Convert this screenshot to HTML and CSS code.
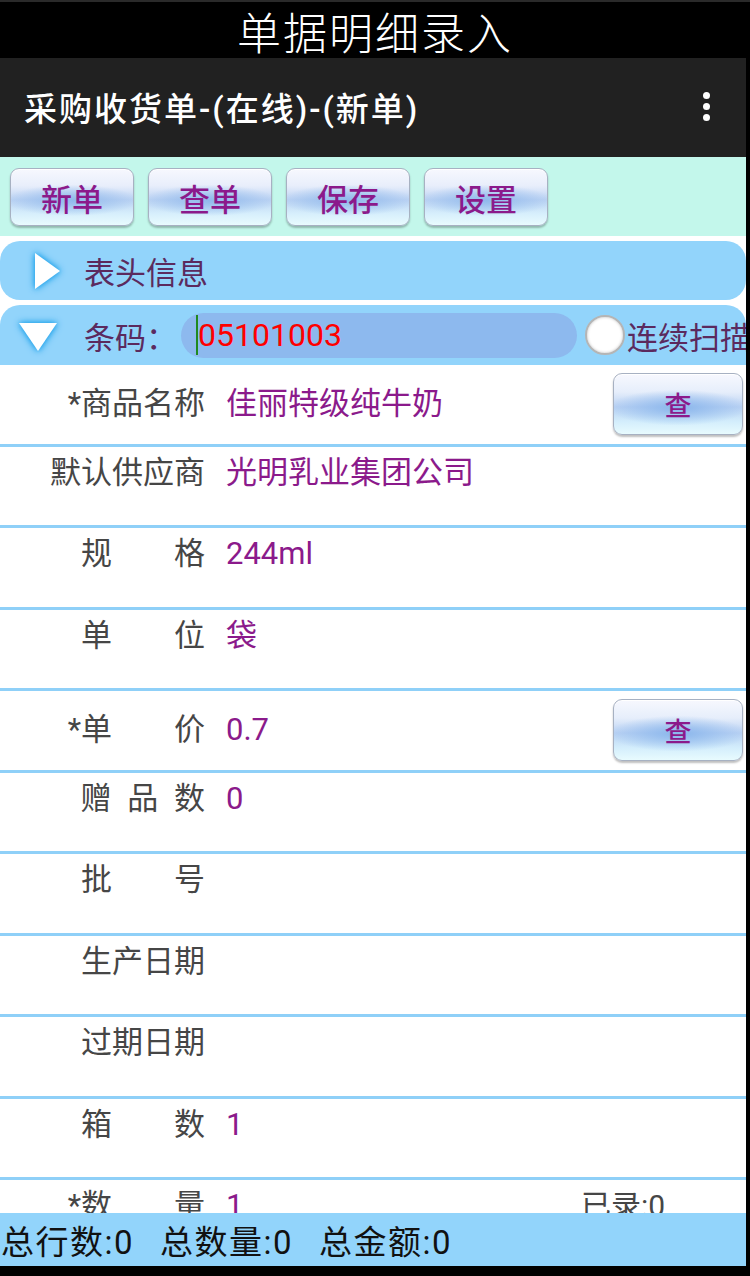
FILE: index.html
```html
<!DOCTYPE html>
<html lang="zh">
<head>
  <meta charset="UTF-8">
  <meta name="viewport" content="width=device-width, initial-scale=1.0">
  <title>单据明细录入</title>
  <link rel="stylesheet" href="styles.css">
</head>
<body>

  <div class="page-title">单据明细录入</div>

  <div class="screen">
    <!-- barra superior -->
    <div class="appbar">
      <span class="appbar-title">采购收货单-(在线)-(新单)</span>
      <span class="menu-dots"><i></i><i></i><i></i></span>
    </div>

    <div class="toolbar">
      <button type="button" class="tool-btn">新单</button>
      <button type="button" class="tool-btn">查单</button>
      <button type="button" class="tool-btn">保存</button>
      <button type="button" class="tool-btn">设置</button>
    </div>

    <div class="section">
      <div class="head-row">
        <svg class="arrow arrow-right" width="40" height="48" viewBox="0 0 40 48">
          <polygon points="9,6 34,24 9,42" />
        </svg>
        <span class="head-text">表头信息</span>
      </div>

      <div class="barcode-row">
        <svg class="arrow arrow-down" width="50" height="42" viewBox="0 0 50 42">
          <polygon points="7,8 45,8 26,36" />
        </svg>
        <span class="head-text">条码：</span>
        <div class="barcode-input"><span class="caret"></span>05101003</div>
        <span class="radio"></span>
        <span class="head-text scan-text">连续扫描</span>
      </div>
    </div>

    <div class="fields">
      <div class="field-row with-btn">
        <span class="label">*商品名称</span>
        <span class="value">佳丽特级纯牛奶</span>
        <span class="side"><button type="button" class="find-btn">查</button></span>
      </div>
      <div class="field-row">
        <span class="label">默认供应商</span>
        <span class="value">光明乳业集团公司</span>
      </div>
      <div class="field-row">
        <span class="label">规　　格</span>
        <span class="value">244ml</span>
      </div>
      <div class="field-row">
        <span class="label">单　　位</span>
        <span class="value">袋</span>
      </div>
      <div class="field-row with-btn">
        <span class="label">*单　　价</span>
        <span class="value">0.7</span>
        <span class="side"><button type="button" class="find-btn">查</button></span>
      </div>
      <div class="field-row">
        <span class="label">赠&ensp;品&ensp;数</span>
        <span class="value">0</span>
      </div>
      <div class="field-row">
        <span class="label">批　　号</span>
        <span class="value"></span>
      </div>
      <div class="field-row">
        <span class="label">生产日期</span>
        <span class="value"></span>
      </div>
      <div class="field-row">
        <span class="label">过期日期</span>
        <span class="value"></span>
      </div>
      <div class="field-row">
        <span class="label">箱　　数</span>
        <span class="value">1</span>
      </div>
      <div class="field-row">
        <span class="label">*数　　量</span>
        <span class="value">1</span>
        <span class="side side-text">已录:0</span>
      </div>
    </div>

    <div class="footer">
      <span>总行数:0</span>
      <span>总数量:0</span>
      <span>总金额:0</span>
    </div>
  </div>

</body>
</html>
```

FILE: styles.css
```css
body {
  margin: 0;
  background-color: #000000;
  font-family: Roboto, "Noto Sans CJK SC", sans-serif;
  width: 750px;
  height: 1276px;
  overflow: hidden;
}

.page-title {
  height: 56px;
  border-top: 2px solid #2a2a2a;
  color: #ffffff;
  font-size: 44px;
  font-weight: 300;
  line-height: 58px;
  text-align: center;
  letter-spacing: 2px;
  font-family: "Noto Sans CJK SC", sans-serif;
}

.screen {
  width: 746px;
  display: flex;
  flex-direction: column;
}

.appbar {
  height: 99px;
  background-color: #212121;
  display: flex;
  align-items: center;
  padding: 0 36px 0 24px;
  color: #ffffff;
}

.appbar-title {
  flex: 1;
  font-size: 33px;
  font-weight: 500;
  letter-spacing: 2px;
  margin-top: -2px;
}

.menu-dots {
  display: flex;
  flex-direction: column;
  gap: 4px;
  margin-top: -2px;
}

.menu-dots i {
  width: 7px;
  height: 7px;
  border-radius: 50%;
  background-color: #ffffff;
}

.toolbar {
  height: 79px;
  background-color: #c3f7eb;
  display: flex;
  align-items: flex-start;
  gap: 14px;
  padding: 11px 0 0 10px;
  box-sizing: border-box;
}

.tool-btn {
  width: 124px;
  height: 58px;
  padding: 0;
  border: 1px solid #a7b1c2;
  border-radius: 9px;
  background:
    radial-gradient(ellipse 55% 28% at 50% 56%, #90b9ec 0%, rgba(144, 185, 236, 0) 100%),
    linear-gradient(#f7f8fe 0%, #e8eefb 30%, #bcd3f3 55%, #d7effc 80%, #e8fbfe 100%);
  box-shadow: 0 2px 2px rgba(0, 0, 0, 0.25), inset 0 1px 0 #ffffff;
  color: #8b1a8b;
  font-size: 31px;
  font-weight: 500;
  font-family: "Noto Sans CJK SC", sans-serif;
}

.section {
  background-color: #ffffff;
  padding-top: 5px;
}

.head-row,
.barcode-row {
  background-color: #92d4fb;
  display: flex;
  align-items: center;
  color: #5b2a5e;
  font-size: 31px;
}

.head-row {
  height: 59px;
  border-radius: 20px;
  margin-bottom: 5px;
}

.barcode-row {
  height: 60px;
  border-radius: 20px 20px 0 0;
  overflow: hidden;
}

.arrow {
  flex-shrink: 0;
  fill: #ffffff;
  filter: drop-shadow(0 0 3px #1b9fe9) drop-shadow(0 0 2px #4ab7f2);
}

.arrow-right {
  margin: 0 18px 0 26px;
}

.arrow-down {
  margin: 2px 22px 0 12px;
}

.head-text {
  flex-shrink: 0;
  white-space: nowrap;
}

.barcode-input {
  width: 396px;
  height: 45px;
  flex-shrink: 0;
  margin-left: 4px;
  border-radius: 23px;
  background-color: #8db9ee;
  color: #ff0000;
  font-size: 32px;
  line-height: 45px;
  padding-left: 15px;
  box-sizing: border-box;
  display: flex;
  align-items: center;
}

.caret {
  width: 2px;
  height: 40px;
  background-color: #1f8a1f;
}

.radio {
  width: 36px;
  height: 36px;
  flex-shrink: 0;
  margin-left: 8px;
  border-radius: 50%;
  background-color: #ffffff;
  border: 2px solid #b5b5b5;
  box-shadow: inset 0 0 3px rgba(0, 0, 0, 0.25);
}

.scan-text {
  margin-left: 2px;
}

.fields {
  height: 848px;
  overflow: hidden;
  background-color: #ffffff;
}

.field-row {
  height: 78.5px;
  border-bottom: 3px solid #8fd0f8;
  display: flex;
  align-items: flex-start;
  font-size: 31px;
  line-height: 52px;
}

.field-row.with-btn {
  align-items: center;
}

.label {
  width: 205px;
  flex-shrink: 0;
  text-align: right;
  color: #464646;
  white-space: nowrap;
}

.value {
  flex: 1;
  margin-left: 21px;
  color: #8b1a8b;
  white-space: nowrap;
}

.side {
  width: 165px;
  flex-shrink: 0;
  display: flex;
  justify-content: flex-end;
}

.side-text {
  justify-content: flex-start;
  color: #464646;
  font-size: 30px;
}

.find-btn {
  width: 130px;
  height: 62px;
  margin-right: 3px;
  padding: 0;
  border: 1px solid #a7b1c2;
  border-radius: 9px;
  background:
    radial-gradient(ellipse 55% 30% at 50% 56%, #8ab6ec 0%, rgba(138, 182, 236, 0) 100%),
    linear-gradient(#f7f8fe 0%, #e6eefb 30%, #bad2f3 55%, #d4eefc 80%, #e8fbfe 100%);
  box-shadow: 0 2px 2px rgba(0, 0, 0, 0.25), inset 0 1px 0 #ffffff;
  color: #8b1a8b;
  font-size: 27px;
  font-weight: 500;
  font-family: "Noto Sans CJK SC", sans-serif;
}

.footer {
  height: 53px;
  background-color: #92d4fb;
  display: flex;
  align-items: center;
  gap: 26px;
  padding-left: 1px;
  color: #111111;
  font-size: 33px;
  letter-spacing: 1.5px;
}
```
